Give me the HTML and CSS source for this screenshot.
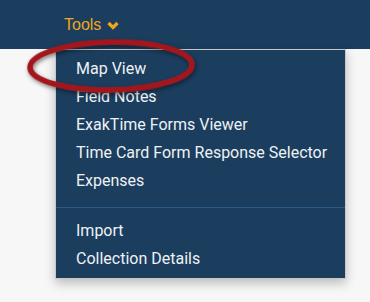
FILE: index.html
```html
<!DOCTYPE html>
<html lang="en">
<head>
  <meta charset="UTF-8">
  <meta name="viewport" content="width=device-width, initial-scale=1.0">
  <title>Tools menu</title>
  <link rel="stylesheet" href="styles.css">
</head>
<body>
  <nav class="topbar">
    <div class="nav-item">
      <span class="nav-link">Tools
        <svg class="chevron" width="12" height="9" viewBox="0 0 12 9">
          <path d="M1.5 2 L6 6.5 L10.5 2" fill="none" stroke="#f2a51c" stroke-width="3.2"/>
        </svg>
      </span>
      <ul class="dropdown">
        <li>Map View</li>
        <li>Field Notes</li>
        <li>ExakTime Forms Viewer</li>
        <li>Time Card Form Response Selector</li>
        <li>Expenses</li>
        <li class="divider"></li>
        <li>Import</li>
        <li>Collection Details</li>
      </ul>
    </div>
  </nav>

  <svg class="callout" width="190" height="70" viewBox="0 0 190 70">
    <defs>
      <filter id="shade" x="-20%" y="-40%" width="140%" height="180%">
        <feDropShadow dx="1" dy="2" stdDeviation="2" flood-color="#000" flood-opacity="0.5"/>
      </filter>
    </defs>
    <ellipse cx="88" cy="30" rx="81" ry="24" transform="rotate(-1 88 30)"
             fill="none" stroke="#a3171f" stroke-width="5.5" filter="url(#shade)"/>
  </svg>
</body>
</html>
```

FILE: styles.css
```css
body {
  margin: 0;
  padding: 0;
  background-color: #f7f7f7;
  font-family: Roboto, "Liberation Sans", Arial, sans-serif;
  height: 302px;
  overflow: hidden;
}

.topbar {
  height: 49px;
  background-color: #1b3d5e;
  display: flex;
  align-items: center;
  padding-left: 64px;
}

.nav-item {
  position: relative;
  height: 100%;
  display: flex;
  align-items: center;
}

.nav-link {
  font-family: "Liberation Sans", Arial, sans-serif;
  font-size: 16px;
  color: #f2a51c;
  display: flex;
  align-items: center;
  gap: 6px;
  padding-top: 1px;
}

.chevron {
  margin-top: 1px;
}

.dropdown {
  position: absolute;
  top: 49px;
  left: -9px;
  width: 289px;
  margin: 0;
  padding: 5px 0;
  list-style: none;
  background-color: #1b3d5e;
  border: 1px solid #c8c8c8;
  box-shadow: 0 4px 10px rgba(0, 0, 0, 0.25);
}

.dropdown li {
  padding: 0 20px;
  line-height: 28px;
  font-size: 16px;
  font-weight: 400;
  color: #eef2f5;
  white-space: nowrap;
}

.dropdown li.divider {
  height: 1px;
  padding: 0;
  margin: 12px 0 9px;
  background-color: #2b5a84;
}

.callout {
  position: absolute;
  left: 23px;
  top: 36px;
}
```
